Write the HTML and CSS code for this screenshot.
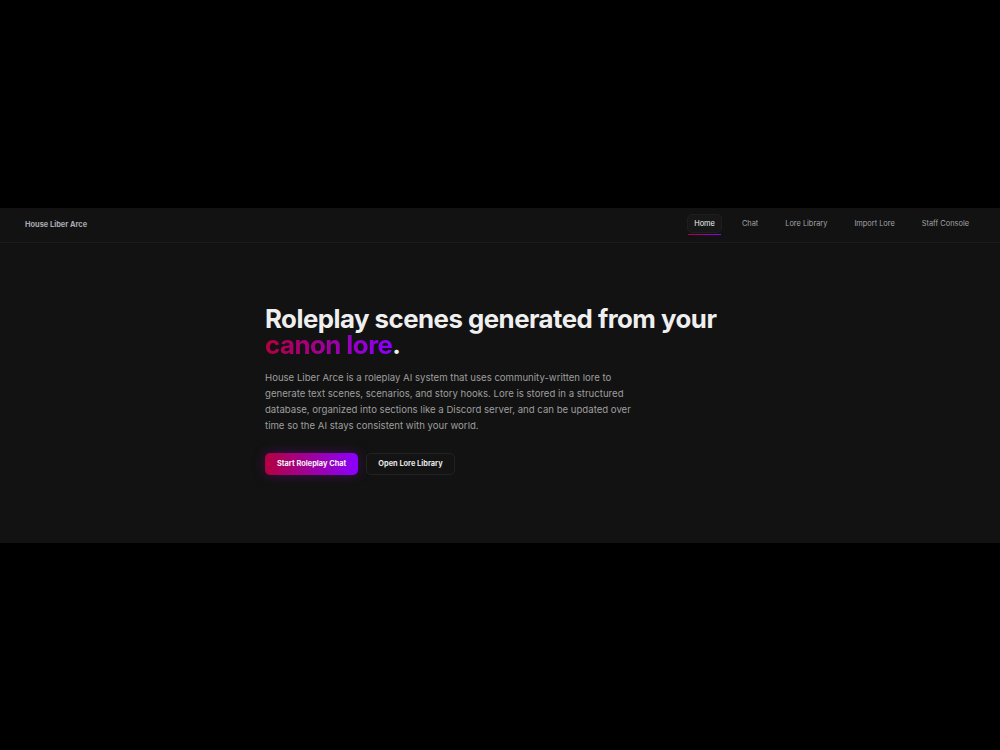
FILE: index.html
```html
<!DOCTYPE html>
<html>
<head>
<meta charset="utf-8">
<link rel="stylesheet" href="styles.css">
</head>
<body>
<div class="app">
  <header class="topbar">
    <div class="brand">House Liber Arce</div>
    <nav class="nav">
      <a class="nav-item active">Home</a>
      <a class="nav-item">Chat</a>
      <a class="nav-item">Lore Library</a>
      <a class="nav-item">Import Lore</a>
      <a class="nav-item">Staff Console</a>
    </nav>
  </header>
  <main class="hero">
    <div class="hero-inner">
      <h1 class="title">Roleplay scenes generated from your <span class="grad">canon lore</span>.</h1>
      <p class="lead">House Liber Arce is a roleplay AI system that uses community-written lore to generate text scenes, scenarios, and story hooks. Lore is stored in a structured database, organized into sections like a Discord server, and can be updated over time so the AI stays consistent with your world.</p>
      <div class="actions">
        <a class="btn btn-primary">Start Roleplay Chat</a>
        <a class="btn btn-ghost">Open Lore Library</a>
      </div>
    </div>
  </main>
</div>
</body>
</html>
```
FILE: styles.css
```css
html, body {
  margin: 0;
  padding: 0;
  height: 100%;
  background: #000;
  font-family: Inter, "Noto Sans", sans-serif;
}
body {
  display: flex;
  flex-direction: column;
  justify-content: center;
}
.app {
  background: #121212;
  height: 335px;
  display: flex;
  flex-direction: column;
}
.topbar {
  height: 34px;
  border-bottom: 1px solid #1c1c1c;
  display: flex;
  align-items: center;
  justify-content: space-between;
  padding: 0 24px 0 25px;
}
.brand {
  font-size: 7.4px;
  font-weight: 700;
  color: #a9aab2;
}
.nav {
  display: flex;
  gap: 13px;
  margin-top: -2px;
}
.nav-item {
  font-size: 7.4px;
  line-height: 9px;
  color: #a3a3a8;
  padding: 4px 6px;
  border-radius: 5px;
  position: relative;
  border: 1px solid transparent;
}
.nav-item.active {
  color: #f2f2f2;
  background: #171717;
  border-color: #1e1e1e;
}
.nav-item.active::after {
  content: "";
  position: absolute;
  left: 0;
  right: 0;
  bottom: -3px;
  height: 1px;
  background: linear-gradient(90deg, #b3003f, #8a00ff);
}
.hero {
  flex: 1;
  display: flex;
  justify-content: center;
  padding-top: 63px;
}
.hero-inner {
  width: 470px;
}
.title {
  margin: 0;
  font-size: 25.8px;
  line-height: 26.5px;
  font-weight: 700;
  letter-spacing: -0.02em;
  color: #efefef;
}
.grad {
  background: linear-gradient(90deg, #b3003f, #8a00ff);
  -webkit-background-clip: text;
  background-clip: text;
  color: transparent;
}
.lead {
  margin: 11px 0 0;
  width: 372px;
  font-size: 9.6px;
  line-height: 16.3px;
  color: #9e9e9e;
}
.actions {
  display: flex;
  gap: 8px;
  margin-top: 18px;
}
.btn {
  font-size: 7.4px;
  font-weight: 700;
  height: 22px;
  display: flex;
  align-items: center;
  padding: 0 12px;
  border-radius: 5px;
  box-sizing: border-box;
  color: #f5f5f5;
}
.btn-primary {
  background: linear-gradient(90deg, #b3003f, #8a00ff);
  box-shadow: 0 0 12px rgba(150, 0, 200, 0.35);
}
.btn-ghost {
  border: 1px solid #222;
  background: #131313;
  color: #e6e6e6;
  padding: 0 11px;
}
```
